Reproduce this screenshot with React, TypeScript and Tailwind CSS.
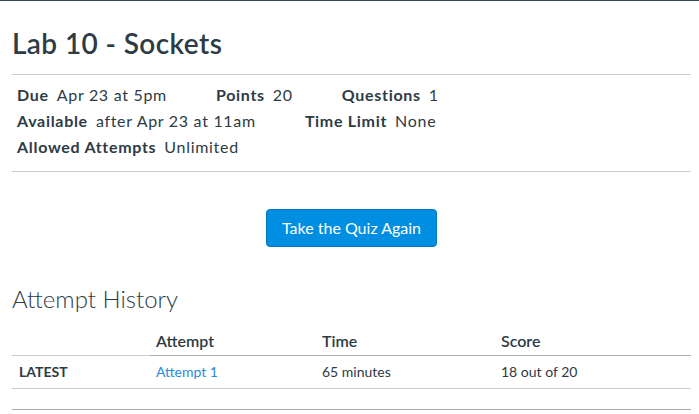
import React from 'react';

const details = [
  [
    { label: 'Due', value: 'Apr 23 at 5pm' },
    { label: 'Points', value: '20' },
    { label: 'Questions', value: '1' },
  ],
  [
    { label: 'Available', value: 'after Apr 23 at 11am' },
    { label: 'Time Limit', value: 'None' },
  ],
  [{ label: 'Allowed Attempts', value: 'Unlimited' }],
];

function DetailItem({ label, value }: { label: string; value: string }) {
  return (
    <div className="flex items-baseline gap-[8px]">
      <span className="font-bold">{label}</span>
      <span>{value}</span>
    </div>
  );
}

export default function App() {
  return (
    <div
      className="min-h-screen bg-white border-t border-[#394b58] text-[#2d3b45]"
      style={{ fontFamily: 'Lato, "Open Sans", sans-serif' }}
    >
      <div className="pl-3 pr-2">
        <h1 className="mt-[25px] text-[28px] leading-[34px] font-semibold tracking-[0.4px]">Lab 10 - Sockets</h1>

        <div className="mt-[14px] border-t border-[#c7cdd1] pt-[7px] pb-[11px] pl-[5px] text-[16px] leading-[26px] tracking-[0.7px]">
          {details.map((row, i) => (
            <div key={i} className="flex gap-[49px]">
              {row.map((d) => (
                <DetailItem key={d.label} label={d.label} value={d.value} />
              ))}
            </div>
          ))}
        </div>

        <div className="border-t border-[#c7cdd1] flex justify-center pt-[37px]">
          <button className="h-[38px] px-[15px] rounded-[4px] bg-[#008ee2] border border-[#0079c1] text-white text-[16px]">
            Take the Quiz Again
          </button>
        </div>

        <h2 className="mt-[37px] text-[24px] leading-[29px] font-light">Attempt History</h2>

        <div className="grid grid-cols-[138px_166px_179px_1fr]">
          <div className="border-b border-[#c7cdd1]" />
          <div className="pt-[18px] pb-[4px] px-[6px] text-[16px] leading-[20px] font-semibold border-b border-[#a5afb5]">
            Attempt
          </div>
          <div className="pt-[18px] pb-[4px] px-[6px] text-[16px] leading-[20px] font-semibold border-b border-[#a5afb5]">
            Time
          </div>
          <div className="pt-[18px] pb-[4px] px-[6px] text-[16px] leading-[20px] font-semibold border-b border-[#a5afb5]">
            Score
          </div>

          <div className="pt-[6px] pb-[6px] px-[7px] text-[14px] leading-[20px] font-bold border-b border-[#c7cdd1]">
            LATEST
          </div>
          <div className="pt-[6px] pb-[6px] px-[6px] text-[14px] leading-[20px] border-b border-[#c7cdd1]">
            <a href="#" className="text-[#2b8ad9]">Attempt 1</a>
          </div>
          <div className="pt-[6px] pb-[6px] px-[6px] text-[14px] leading-[20px] border-b border-[#c7cdd1]">
            65 minutes
          </div>
          <div className="pt-[6px] pb-[6px] px-[6px] text-[14px] leading-[20px] border-b border-[#c7cdd1]">
            18 out of 20
          </div>
        </div>

        <div className="h-[21px] border-b border-[#a8a8a8]" />
      </div>
    </div>
  );
}
